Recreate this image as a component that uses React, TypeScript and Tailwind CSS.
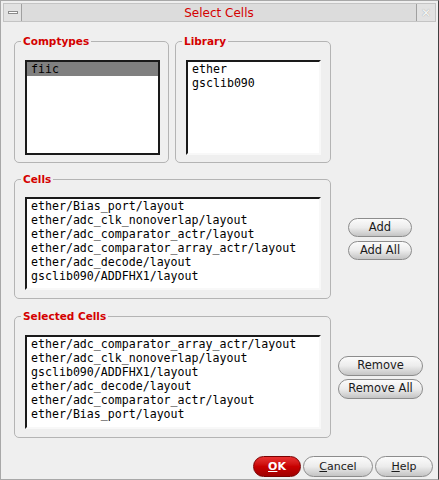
import React from "react";

const cells = [
  "ether/Bias_port/layout",
  "ether/adc_clk_nonoverlap/layout",
  "ether/adc_comparator_actr/layout",
  "ether/adc_comparator_array_actr/layout",
  "ether/adc_decode/layout",
  "gsclib090/ADDFHX1/layout",
];

const selected = [
  "ether/adc_comparator_array_actr/layout",
  "ether/adc_clk_nonoverlap/layout",
  "gsclib090/ADDFHX1/layout",
  "ether/adc_decode/layout",
  "ether/adc_comparator_actr/layout",
  "ether/Bias_port/layout",
];

const mono = "font-['DejaVu_Sans_Mono',monospace] text-[11.6px] leading-[14px] text-black";

function Group({
  label,
  className,
  children,
}: {
  label: string;
  className: string;
  children: React.ReactNode;
}) {
  return (
    <div className={`relative rounded-[5px] border border-[#b4b4b4] ${className}`}>
      <span className="absolute -top-[8px] left-[6px] bg-[#efefef] px-[2px] text-[10.5px] font-bold leading-[14px] text-[#d40000]">
        {label}
      </span>
      {children}
    </div>
  );
}

function ListBox({
  items,
  className,
  focused,
  highlight,
}: {
  items: string[];
  className: string;
  focused?: boolean;
  highlight?: number;
}) {
  const border = focused
    ? "border-2 border-[#1a1a1a]"
    : "border-2 border-t-[#1a1a1a] border-l-[#1a1a1a] border-r-[#f8f8f8] border-b-[#f8f8f8]";
  return (
    <div className={`bg-white ${border} ${className}`}>
      {items.map((it, i) => (
        <div
          key={i}
          className={`${mono} h-[14px] whitespace-pre pl-[4px] ${
            highlight === i ? "bg-[#808080] text-[#f4f4f4]" : ""
          }`}
        >
          {it}
        </div>
      ))}
    </div>
  );
}

function Btn({ children, className }: { children: React.ReactNode; className: string }) {
  return (
    <button
      className={`flex items-center justify-center rounded-full border border-[#8c8c8c] bg-gradient-to-b from-[#fbfbfb] via-[#ececec] to-[#c4c4c4] leading-none text-[#1a1a1a] ${className}`}
    >
      {children}
    </button>
  );
}

export default function App() {
  return (
    <div className="flex h-[480px] w-[439px] flex-col overflow-hidden border border-[#a8a8a8] border-r-[#404040] bg-[#efefef] font-['DejaVu_Sans',sans-serif]">
      {/* title bar */}
      <div className="mx-[2px] mt-[2px] flex h-[19px] border border-[#c4c4c4] bg-[#dcdcdc]">
        <div className="flex w-[18px] items-center justify-center border-r border-[#a0a0a0] bg-[#e2e2e2]">
          <div className="h-[3px] w-[10px] border border-[#8a8a8a] bg-white" />
        </div>
        <div className="flex flex-1 items-center justify-center text-[12px] text-[#d40000]">
          Select Cells
        </div>
        <div className="flex w-[19px] items-center justify-center border-l border-[#a0a0a0] bg-[#e2e2e2] text-[12px] font-bold text-[#f8f8f8] [text-shadow:0_0_1px_#8a8a8a]">
          ✕
        </div>
      </div>

      <div className="flex flex-col pl-[13px]">
        {/* row 1 */}
        <div className="mt-[19px] flex gap-[6px]">
          <Group label="Comptypes" className="h-[122px] w-[155px] pt-[18px] pl-[10px]">
            <ListBox items={["fiic"]} focused highlight={0} className="h-[95px] w-[135px]" />
          </Group>
          <Group label="Library" className="h-[122px] w-[156px] pt-[18px] pl-[10px]">
            <ListBox items={["ether", "gsclib090"]} className="h-[95px] w-[135px]" />
          </Group>
        </div>

        {/* row 2 */}
        <div className="mt-[16px] flex items-center">
          <Group label="Cells" className="h-[120px] w-[317px] pt-[17px] pl-[10px]">
            <ListBox items={cells} className="h-[93px] w-[296px]" />
          </Group>
          <div className="ml-[17px] flex flex-col gap-[4px]">
            <Btn className="h-[19px] w-[64px] text-[11.5px]">Add</Btn>
            <Btn className="h-[19px] w-[64px] text-[11.5px]">Add All</Btn>
          </div>
        </div>

        {/* row 3 */}
        <div className="mt-[17px] flex items-center">
          <Group label="Selected Cells" className="h-[122px] w-[317px] pt-[18px] pl-[10px]">
            <ListBox items={selected} className="h-[94px] w-[296px]" />
          </Group>
          <div className="ml-[7px] flex flex-col gap-[3px]">
            <Btn className="h-[20px] w-[85px] text-[11.5px]">Remove</Btn>
            <Btn className="h-[20px] w-[85px] text-[11.5px]">Remove All</Btn>
          </div>
        </div>
      </div>

      {/* bottom buttons */}
      <div className="mt-[18px] flex justify-end gap-[2px] pr-[5px]">
        <button className="flex h-[21px] w-[48px] items-center justify-center rounded-full border border-[#7a0000] bg-gradient-to-b from-[#e83030] via-[#c80000] to-[#a00000] text-[11px] font-bold leading-none text-white">
          <span className="underline">O</span>K
        </button>
        <Btn className="h-[21px] w-[70px] text-[11px]">
          <span className="underline">C</span>ancel
        </Btn>
        <Btn className="h-[21px] w-[58px] text-[11px]">
          <span className="underline">H</span>elp
        </Btn>
      </div>
    </div>
  );
}
